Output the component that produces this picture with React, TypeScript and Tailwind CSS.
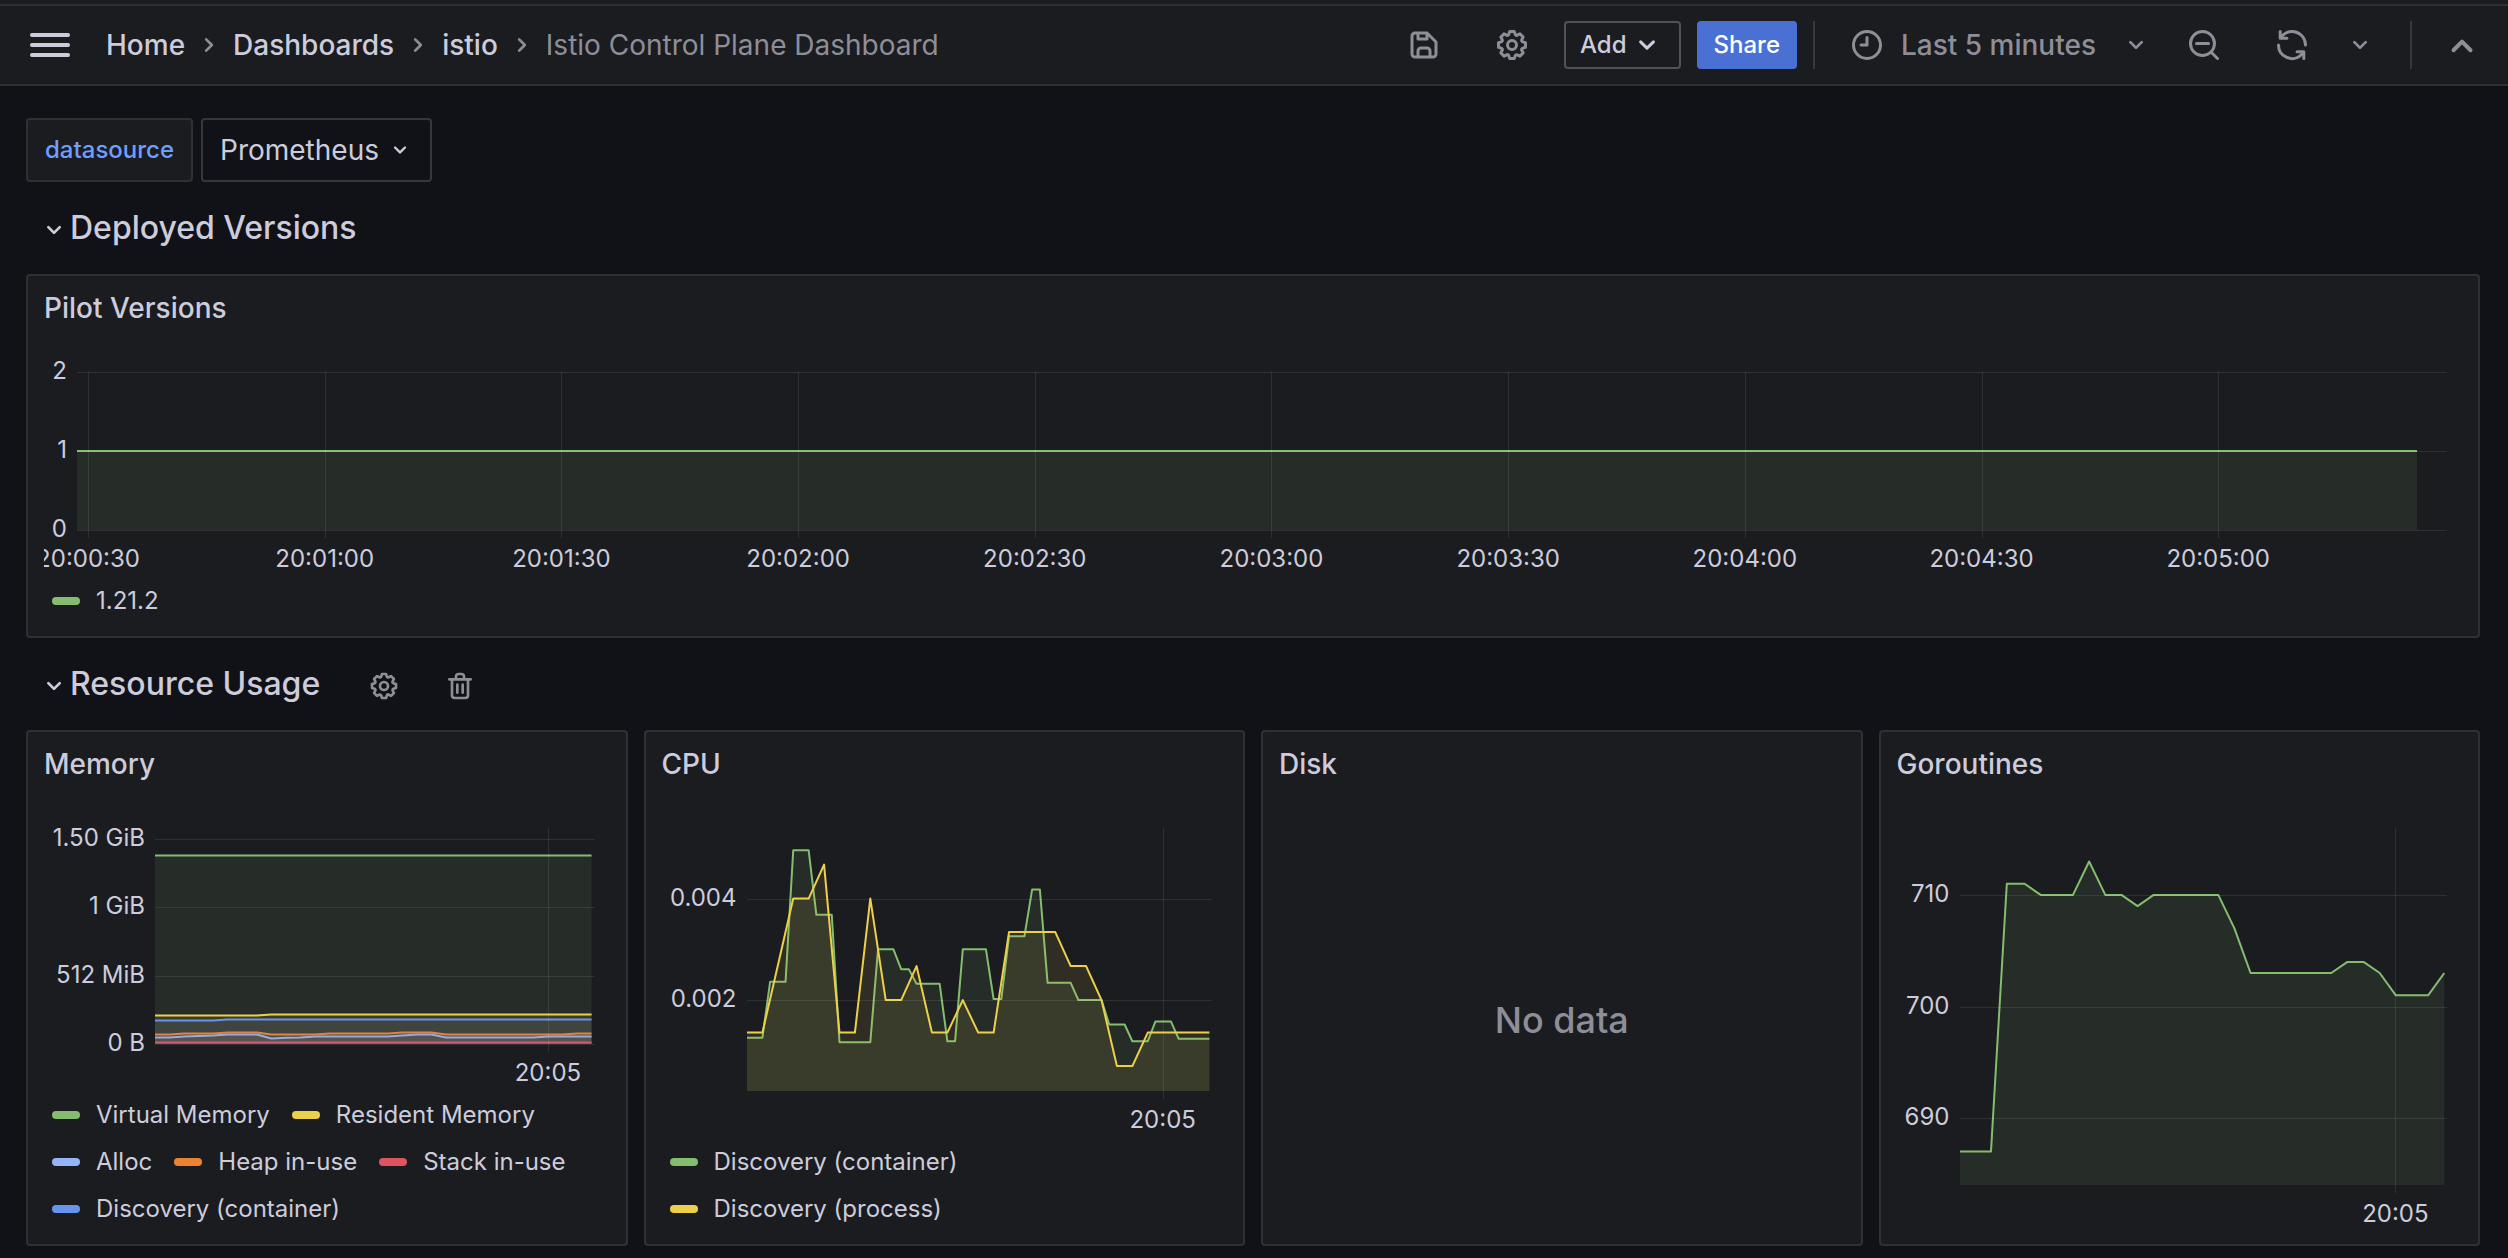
import React from 'react'

type Point = [number, number]
type Tick = { at: number; label: string }
type Series = { name: string; color: string; points: Point[] }

const GREEN = '#85bd6f'
const YELLOW = '#edd04a'
const LIGHT_BLUE = '#93b4f8'
const ORANGE = '#ee8233'
const RED = '#df5460'
const BLUE = '#6794ec'

const ICONS = {
  angleDown:
    'M17,9.17a1,1,0,0,0-1.41,0L12,12.71,8.46,9.17a1,1,0,0,0-1.41,0,1,1,0,0,0,0,1.42l4.24,4.24a1,1,0,0,0,1.42,0L17,10.59A1,1,0,0,0,17,9.17Z',
  angleUp:
    'M17,13.41,12.71,9.17a1,1,0,0,0-1.42,0L7.05,13.41a1,1,0,0,0,0,1.42,1,1,0,0,0,1.41,0L12,11.29l3.54,3.54a1,1,0,0,0,.7.29,1,1,0,0,0,.71-.29A1,1,0,0,0,17,13.41Z',
  angleRight:
    'M14.83,11.29,10.59,7.05a1,1,0,0,0-1.42,0,1,1,0,0,0,0,1.41L12.71,12,9.17,15.54a1,1,0,0,0,0,1.41,1,1,0,0,0,.71.29,1,1,0,0,0,.71-.29l4.24-4.24A1,1,0,0,0,14.83,11.29Z',
  save: 'M20.71,9.29l-6-6a1,1,0,0,0-.32-.21A1.09,1.09,0,0,0,14,3H6A3,3,0,0,0,3,6V18a3,3,0,0,0,3,3H18a3,3,0,0,0,3-3V10A1,1,0,0,0,20.71,9.29ZM9,5h4V7H9Zm6,14H9V16a1,1,0,0,1,1-1h4a1,1,0,0,1,1,1Zm4-1a1,1,0,0,1-1,1H17V16a3,3,0,0,0-3-3H10a3,3,0,0,0-3,3v3H6a1,1,0,0,1-1-1V6A1,1,0,0,1,6,5H7V8A1,1,0,0,0,8,9h6a1,1,0,0,0,1-1V6.41l4,4Z',
  cog: 'M21.32,9.55l-1.89-.63.89-1.78A1,1,0,0,0,20.13,6L18,3.87a1,1,0,0,0-1.15-.19l-1.78.89-.63-1.89A1,1,0,0,0,13.5,2h-3a1,1,0,0,0-.95.68L8.92,4.57,7.14,3.68A1,1,0,0,0,6,3.87L3.87,6a1,1,0,0,0-.19,1.15l.89,1.78-1.89.63A1,1,0,0,0,2,10.5v3a1,1,0,0,0,.68.95l1.89.63-.89,1.78A1,1,0,0,0,3.87,18L6,20.13a1,1,0,0,0,1.15.19l1.78-.89.63,1.89a1,1,0,0,0,.95.68h3a1,1,0,0,0,.95-.68l.63-1.89,1.78.89A1,1,0,0,0,18,20.13L20.13,18a1,1,0,0,0,.19-1.15l-.89-1.78,1.89-.63A1,1,0,0,0,22,13.5v-3A1,1,0,0,0,21.32,9.55ZM20,12.78l-1.2.4A2,2,0,0,0,17.64,16l.57,1.14-1.1,1.1L16,17.64a2,2,0,0,0-2.79,1.16l-.4,1.2H11.22l-.4-1.2A2,2,0,0,0,8,17.64l-1.14.57-1.1-1.1L6.36,16A2,2,0,0,0,5.2,13.18L4,12.78V11.22l1.2-.4A2,2,0,0,0,6.36,8L5.79,6.89l1.1-1.1L8,6.36A2,2,0,0,0,10.82,5.2l.4-1.2h1.56l.4,1.2A2,2,0,0,0,16,6.36l1.14-.57,1.1,1.1L17.64,8a2,2,0,0,0,1.16,2.79l1.2.4ZM12,8a4,4,0,1,0,4,4A4,4,0,0,0,12,8Zm0,6a2,2,0,1,1,2-2A2,2,0,0,1,12,14Z',
  clock:
    'M12,2A10,10,0,1,0,22,12,10,10,0,0,0,12,2Zm0,18a8,8,0,1,1,8-8A8,8,0,0,1,12,20ZM12,6a1,1,0,0,0-1,1v4H8a1,1,0,0,0,0,2h4a1,1,0,0,0,1-1V7A1,1,0,0,0,12,6Z',
  searchMinus:
    'M21.71,20.29,18,16.61A9,9,0,1,0,16.61,18l3.68,3.68a1,1,0,0,0,1.42,0A1,1,0,0,0,21.71,20.29ZM11,18a7,7,0,1,1,7-7A7,7,0,0,1,11,18Zm4-8H7a1,1,0,0,0,0,2h8a1,1,0,0,0,0-2Z',
  sync: 'M19.91,15.51H15.38a1,1,0,0,0,0,2h2.4A8,8,0,0,1,4,12a1,1,0,1,0-2,0,10,10,0,0,0,16.88,7.23V21a1,1,0,0,0,2,0V16.5A1,1,0,0,0,19.91,15.51ZM12,2A10,10,0,0,0,5.12,4.77V3a1,1,0,0,0-2,0V7.5a1,1,0,0,0,1,1h4.5a1,1,0,0,0,0-2H6.22A8,8,0,0,1,20,12a1,1,0,0,0,2,0A10,10,0,0,0,12,2Z',
  trash:
    'M10,18a1,1,0,0,0,1-1V11a1,1,0,0,0-2,0v6A1,1,0,0,0,10,18ZM20,6H16V5a3,3,0,0,0-3-3H11A3,3,0,0,0,8,5V6H4A1,1,0,0,0,4,8H5V19a3,3,0,0,0,3,3h8a3,3,0,0,0,3-3V8h1a1,1,0,0,0,0-2ZM10,5a1,1,0,0,1,1-1h2a1,1,0,0,1,1,1V6H10Zm7,14a1,1,0,0,1-1,1H8a1,1,0,0,1-1-1V8H17ZM14,18a1,1,0,0,0,1-1V11a1,1,0,0,0-2,0v6A1,1,0,0,0,14,18Z',
}

function Icon({ name, className }: { name: keyof typeof ICONS; className: string }) {
  return (
    <svg viewBox="0 0 24 24" fill="currentColor" aria-hidden="true" className={`shrink-0 ${className}`}>
      <path d={ICONS[name]} />
    </svg>
  )
}

function Breadcrumbs() {
  return (
    <nav aria-label="Breadcrumbs">
      <ol className="flex items-center gap-2 text-[28px] leading-9 whitespace-nowrap">
        {['Home', 'Dashboards', 'istio'].map((label) => (
          <li key={label} className="flex items-center gap-2">
            <a href="#" className="font-medium text-[#ccccdc]">
              {label}
            </a>
            <Icon name="angleRight" className="size-8 text-[#8e8e99]" />
          </li>
        ))}
        <li aria-current="page" className="text-[#8e8e99]">
          Istio Control Plane Dashboard
        </li>
      </ol>
    </nav>
  )
}

function Divider() {
  return <span className="h-12 w-0.5 bg-[#36373d]" />
}

function TopBar() {
  return (
    <header className="border-b-2 border-[#2f3035] bg-[#1b1c20]">
      <div className="h-1" />
      <div className="flex h-20 items-center border-t-2 border-[#2f3035] pr-[22px] pl-[30px]">
        <button aria-label="Open menu" className="mr-9 flex w-10 flex-col gap-1.5">
          <span className="h-1 w-full rounded-sm bg-[#ccccdc]" />
          <span className="h-1 w-full rounded-sm bg-[#ccccdc]" />
          <span className="h-1 w-full rounded-sm bg-[#ccccdc]" />
        </button>
        <Breadcrumbs />
        <div className="ml-auto flex items-center text-[#8e8e99]">
          <button aria-label="Save dashboard" className="flex w-[88px] justify-center">
            <Icon name="save" className="size-9" />
          </button>
          <button aria-label="Dashboard settings" className="mr-2 flex w-[88px] justify-center">
            <Icon name="cog" className="size-9" />
          </button>
          <button className="mr-4 flex h-12 items-center gap-0.5 rounded-sm border-2 border-[#50515a] px-[14px] text-2xl font-medium text-[#ccccdc]">
            Add
            <Icon name="angleDown" className="size-9" />
          </button>
          <button className="mr-4 h-12 rounded-sm bg-[#4a70d4] px-[17px] text-2xl font-medium text-white">Share</button>
          <Divider />
          <button className="ml-[34px] flex items-center text-[28px] font-medium whitespace-nowrap">
            <Icon name="clock" className="mr-4 size-9" />
            Last 5 minutes
            <Icon name="angleDown" className="ml-6 size-8" />
          </button>
          <button aria-label="Zoom out time range" className="ml-[34px]">
            <Icon name="searchMinus" className="size-9" />
          </button>
          <button aria-label="Refresh dashboard" className="ml-[52px]">
            <Icon name="sync" className="size-9" />
          </button>
          <button aria-label="Auto refresh interval" className="mx-[34px]">
            <Icon name="angleDown" className="size-8" />
          </button>
          <Divider />
          <button aria-label="Toggle top bar" className="ml-[26px] pt-0.5">
            <Icon name="angleUp" className="size-12" />
          </button>
        </div>
      </div>
    </header>
  )
}

function RowTitle({ title, children }: { title: string; children?: React.ReactNode }) {
  return (
    <div className="flex h-12 items-center pl-3">
      <button aria-expanded="true" className="flex items-center">
        <Icon name="angleDown" className="mt-1 size-8 text-[#ccccdc]" />
        <h2 className="text-[32px] leading-10 font-medium">{title}</h2>
      </button>
      {children}
    </div>
  )
}

function Panel({ title, children }: { title: string; children: React.ReactNode }) {
  return (
    <section className="flex min-w-0 flex-col rounded-sm border-2 border-[#2f3035] bg-[#1b1c20] pb-3">
      <h3 className="flex h-16 shrink-0 items-center pl-4 text-[28px] font-medium">{title}</h3>
      {children}
    </section>
  )
}

function Chart({
  series,
  xMax,
  yMin,
  yMax,
  xTicks,
  yTicks,
  axisClass,
  plotClass = 'flex-1',
}: {
  series: Series[]
  xMax: number
  yMin: number
  yMax: number
  xTicks: Tick[]
  yTicks: Tick[]
  axisClass: string
  plotClass?: string
}) {
  const px = (x: number) => (x / xMax) * 100
  const py = (y: number) => ((yMax - y) / (yMax - yMin)) * 100
  return (
    <div className="ml-4 flex flex-1 flex-col overflow-hidden pt-8 pr-[31px] text-2xl">
      <div className={`flex ${plotClass}`}>
        <div className={`relative shrink-0 ${axisClass}`}>
          {yTicks.map((t) => (
            <span
              key={t.label}
              className="absolute right-[10px] -mt-[15px] leading-7 whitespace-nowrap"
              style={{ top: `${py(t.at)}%` }}
            >
              {t.label}
            </span>
          ))}
        </div>
        <div className="relative flex-1">
          <svg
            viewBox="0 0 100 100"
            preserveAspectRatio="none"
            aria-hidden="true"
            className="absolute inset-0 size-full overflow-visible"
          >
            {series.map((s) => {
              const pts = s.points.map(([x, y]) => `${px(x)},${py(y)}`).join(' ')
              const end = px(s.points[s.points.length - 1][0])
              return (
                <g key={s.name}>
                  <polygon points={`0,100 ${pts} ${end},100`} fill={s.color} fillOpacity="0.1" />
                  <polyline
                    points={pts}
                    fill="none"
                    stroke={s.color}
                    strokeWidth="2"
                    strokeLinejoin="round"
                    vectorEffect="non-scaling-stroke"
                  />
                </g>
              )
            })}
          </svg>
          {yTicks.map((t) => (
            <span
              key={t.label}
              className="absolute inset-x-0 h-px bg-[#f0faff]/9"
              style={{ top: `${py(t.at)}%` }}
            />
          ))}
          {xTicks.map((t) => (
            <span
              key={t.label}
              className="absolute top-0 -bottom-2 w-px bg-[#f0faff]/9"
              style={{ left: `${px(t.at)}%` }}
            />
          ))}
        </div>
      </div>
      <div className="flex h-[47px] shrink-0">
        <div className={`shrink-0 ${axisClass}`} />
        <div className="relative flex-1">
          {xTicks.map((t) => (
            <span
              key={t.label}
              className="absolute top-[17px] -translate-x-1/2 leading-6 whitespace-nowrap"
              style={{ left: `${px(t.at)}%` }}
            >
              {t.label}
            </span>
          ))}
        </div>
      </div>
    </div>
  )
}

function Legend({ series }: { series: Series[] }) {
  return (
    <ul className="flex flex-wrap gap-x-[22px] pr-4 pl-6 text-2xl">
      {series.map((s) => (
        <li key={s.name}>
          <button className="flex h-[47px] items-center gap-4 whitespace-nowrap">
            <span className="h-2 w-7 rounded-full" style={{ backgroundColor: s.color }} />
            {s.name}
          </button>
        </li>
      ))}
    </ul>
  )
}

const pilot: Series[] = [{ name: '1.21.2', color: GREEN, points: [[0, 1], [296.2, 1]] }]

const pilotTicks: Tick[] = [
  '20:00:30', '20:01:00', '20:01:30', '20:02:00', '20:02:30',
  '20:03:00', '20:03:30', '20:04:00', '20:04:30', '20:05:00',
].map((label, i) => ({ label, at: 1.4 + i * 29.96 }))

/* Memory values are MiB, sampled every 10 s */
const memory: Series[] = [
  { name: 'Virtual Memory', color: GREEN, points: [[0, 1414], [30, 1414]] },
  { name: 'Resident Memory', color: YELLOW, points: [[0, 214], [7, 214], [8, 221], [30, 221]] },
  {
    name: 'Alloc',
    color: LIGHT_BLUE,
    points: [[0, 49], [1, 49], [2, 56], [4, 64], [5, 71], [7, 71], [8, 41], [9, 46], [10, 49], [11, 56], [16, 56], [17, 64], [18, 71], [19, 71], [20, 49], [26, 49], [27, 56], [30, 56]],
  },
  {
    name: 'Heap in-use',
    color: ORANGE,
    points: [[0, 71], [1, 71], [2, 79], [4, 79], [5, 86], [7, 86], [8, 71], [11, 71], [12, 79], [16, 79], [17, 86], [19, 86], [20, 71], [28, 71], [29, 79], [30, 79]],
  },
  { name: 'Stack in-use', color: RED, points: [[0, 11], [30, 11]] },
  { name: 'Discovery (container)', color: BLUE, points: [[0, 176], [4, 176], [5, 184], [30, 184]] },
]

/* CPU values are millicores, sampled every 5 s */
const cpu: Series[] = [
  {
    name: 'Discovery (container)',
    color: GREEN,
    points: [
      [0, 1.26], [2, 1.26], [3, 2.36], [5, 2.36], [6, 4.95], [8, 4.95], [9, 3.68], [11, 3.68], [12, 1.17], [16, 1.17],
      [17, 3], [19, 3], [20, 2.61], [21, 2.61], [22, 2.32], [25, 2.32], [26, 1.19], [27, 1.19], [28, 3], [31, 3],
      [32, 2.02], [33, 2.02], [34, 3.26], [36, 3.26], [37, 4.18], [38, 4.18], [39, 2.34], [42, 2.34], [43, 2], [46, 2],
      [47, 1.52], [49, 1.52], [50, 1.19], [52, 1.19], [53, 1.58], [55, 1.58], [56, 1.24], [60, 1.24],
    ],
  },
  {
    name: 'Discovery (process)',
    color: YELLOW,
    points: [
      [0, 1.36], [2, 1.36], [6, 4], [8, 4], [10, 4.67], [12, 1.36], [14, 1.36], [16, 4], [18, 2], [20, 2], [22, 2.67],
      [24, 1.36], [26, 1.36], [28, 2], [30, 1.36], [32, 1.36], [34, 3.34], [40, 3.34], [42, 2.67], [44, 2.67], [46, 2],
      [48, 0.7], [50, 0.7], [52, 1.36], [60, 1.36],
    ],
  },
]

const goroutines: Series[] = [
  {
    name: 'Goroutines',
    color: GREEN,
    points: [
      [0, 687], [1.92, 687], [2.9, 711], [4, 711], [5, 710], [7, 710], [8, 713], [9, 710], [10, 710], [11, 709],
      [12, 710], [16, 710], [17, 707], [18, 703], [23, 703], [24, 704], [25, 704], [26, 703], [27, 701], [29, 701],
      [30, 703],
    ],
  },
]

export default function App() {
  return (
    <div className="min-h-screen bg-[#111217] font-[Inter,sans-serif] text-[#ccccdc]">
      <TopBar />
      <main className="pr-7 pb-3 pl-[26px]">
        <div className="flex gap-2 pt-8">
          <label
            htmlFor="datasource"
            className="flex h-16 items-center rounded-sm border-2 border-[#2f3035] bg-[#1b1c20] px-[17px] text-2xl font-medium text-[#6e9fff]"
          >
            datasource
          </label>
          <div className="relative">
            <select
              id="datasource"
              className="h-16 appearance-none rounded-sm border-2 border-[#36373d] bg-[#111217] pr-[51px] pl-[17px] text-[28px]"
            >
              <option>Prometheus</option>
            </select>
            <Icon name="angleDown" className="pointer-events-none absolute top-[18px] right-[18px] size-7" />
          </div>
        </div>

        <div className="pt-[22px] pb-[22px]">
          <RowTitle title="Deployed Versions" />
        </div>
        <Panel title="Pilot Versions">
          <Chart
            series={pilot}
            xMax={300}
            yMin={0}
            yMax={2}
            xTicks={pilotTicks}
            yTicks={[
              { at: 2, label: '2' },
              { at: 1, label: '1' },
              { at: 0, label: '0' },
            ]}
            axisClass="w-[33px]"
            plotClass="h-[158px]"
          />
          <Legend series={pilot} />
        </Panel>

        <div className="pt-[22px] pb-[22px]">
          <RowTitle title="Resource Usage">
            <div className="flex items-center gap-11 pt-1 pl-12 text-[#8e8e99]">
              <button aria-label="Row options">
                <Icon name="cog" className="size-8" />
              </button>
              <button aria-label="Delete row">
                <Icon name="trash" className="size-8" />
              </button>
            </div>
          </RowTitle>
        </div>
        <div className="grid grid-cols-4 gap-4">
          <Panel title="Memory">
            <Chart
              series={memory}
              xMax={30.2}
              yMin={0}
              yMax={1620}
              xTicks={[{ at: 27, label: '20:05' }]}
              yTicks={[
                { at: 1536, label: '1.50 GiB' },
                { at: 1024, label: '1 GiB' },
                { at: 512, label: '512 MiB' },
                { at: 0, label: '0 B' },
              ]}
              axisClass="w-[111px]"
              plotClass="h-[216px]"
            />
            <Legend series={memory} />
          </Panel>
          <Panel title="CPU">
            <Chart
              series={cpu}
              xMax={60.4}
              yMin={0.21}
              yMax={5.39}
              xTicks={[{ at: 54, label: '20:05' }]}
              yTicks={[
                { at: 4, label: '0.004' },
                { at: 2, label: '0.002' },
              ]}
              axisClass="w-[85px]"
            />
            <div className="w-96">
              <Legend series={cpu} />
            </div>
          </Panel>
          <Panel title="Disk">
            <p className="flex flex-1 items-center justify-center pt-3 text-4xl font-medium text-[#8e8e99]">No data</p>
          </Panel>
          <Panel title="Goroutines">
            <Chart
              series={goroutines}
              xMax={30.2}
              yMin={684}
              yMax={716}
              xTicks={[{ at: 27, label: '20:05' }]}
              yTicks={[
                { at: 710, label: '710' },
                { at: 700, label: '700' },
                { at: 690, label: '690' },
              ]}
              axisClass="w-[63px]"
            />
          </Panel>
        </div>
      </main>
    </div>
  )
}
